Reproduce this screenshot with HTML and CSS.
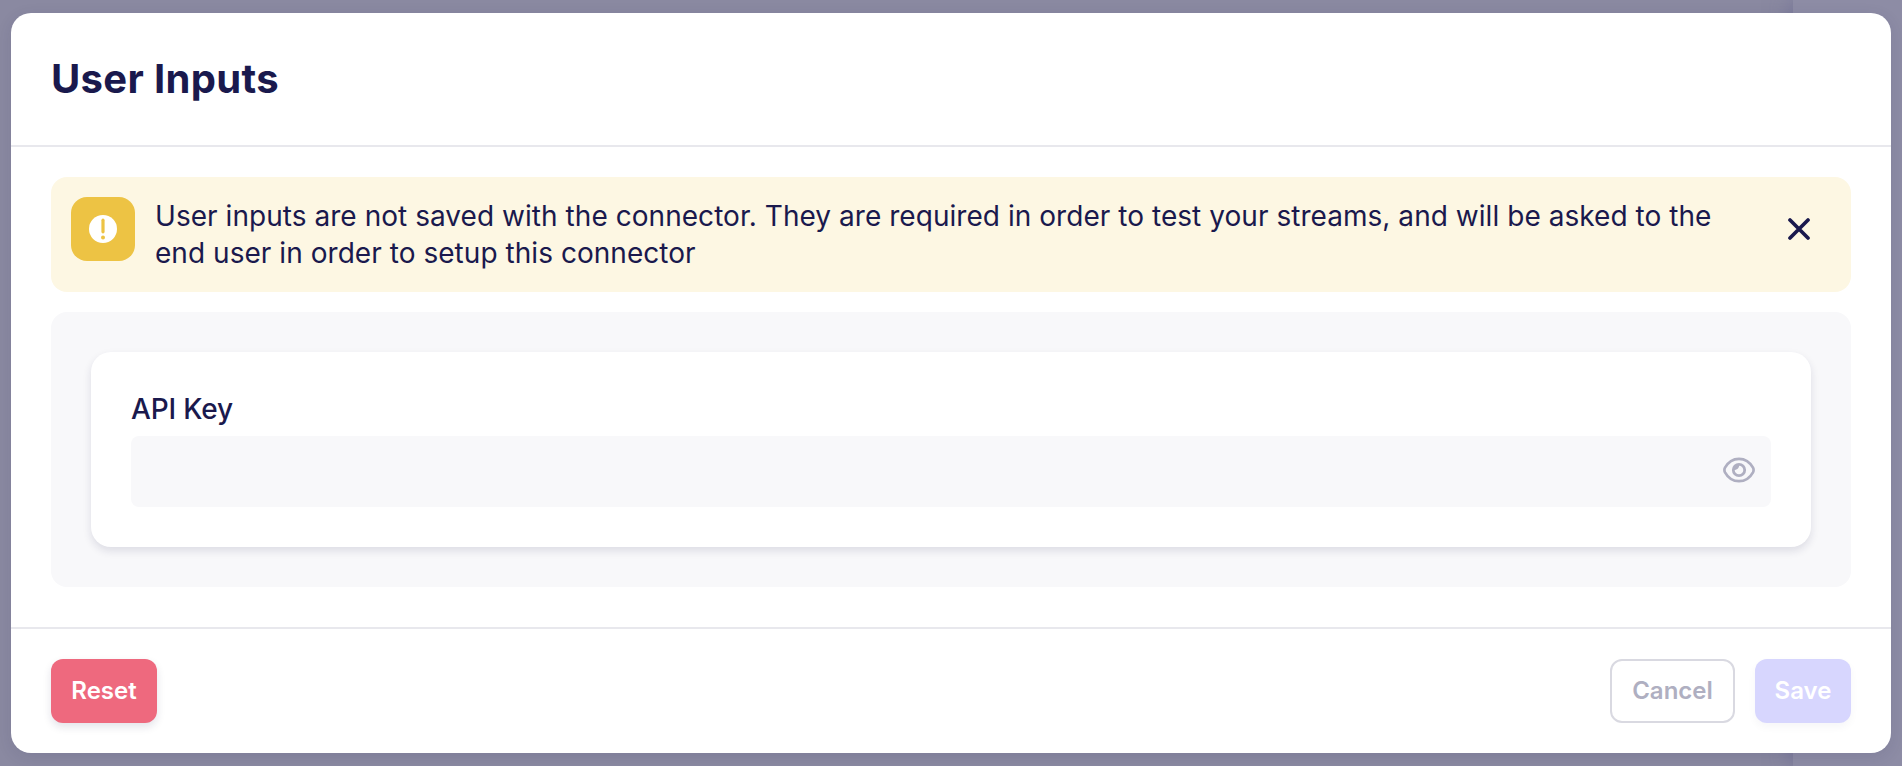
FILE: index.html
```
<!DOCTYPE html>
<html lang="en">
<head>
<meta charset="utf-8">
<title>User Inputs</title>
<link rel="stylesheet" href="styles.css">
</head>
<body>
<div class="backdrop-side"></div>
<main class="modal">
  <header class="modal-header"><h1 class="title">User Inputs</h1></header>
  <section class="modal-body">
    <div class="alert">
      <span class="alert-icon">
        <svg width="28" height="28" viewBox="0 0 28 28"><circle cx="14" cy="14" r="14" fill="#fff"/><path d="M14 5.2v11.600" stroke="#edc344" stroke-width="3.200" stroke-linecap="round"/><circle cx="14" cy="22.600" r="2" fill="#edc344"/></svg>
      </span>
      <p class="alert-text">User inputs are not saved with the connector. They are required in order to test your streams, and will be asked to the end user in order to setup this connector</p>
      <button class="close" aria-label="Close">
        <svg width="22" height="22" viewBox="0 0 22 22"><path d="M2 2l18 18M20 2L2 20" stroke="#1a194d" stroke-width="3.700" stroke-linecap="round"/></svg>
      </button>
    </div>
    <div class="panel">
      <div class="card">
        <label class="label" for="api-key">API Key</label>
        <div class="field">
          <input class="input" id="api-key" type="password">
          <svg class="eye" width="32" height="26" viewBox="0 0 32 26" fill="none" stroke="#afafc1"><path d="M16 1.800C22.600 1.800 27.400 6 30 10.700Q31.200 13 30 15.300C27.400 20 22.600 24.200 16 24.200S4.600 20 2 15.300Q.8 13 2 10.700C4.600 6 9.400 1.800 16 1.800Z" stroke-width="2.700"/><circle cx="16" cy="13" r="5.700" stroke-width="2.800"/><path d="M10 13A6 6 0 0 1 16 7C17 10.500 14 13.500 10 13Z" fill="#afafc1" stroke="none"/></svg>
        </div>
      </div>
    </div>
  </section>
  <footer class="modal-footer">
    <button class="btn reset">Reset</button>
    <div class="actions">
      <button class="btn cancel">Cancel</button>
      <button class="btn save">Save</button>
    </div>
  </footer>
</main>
</body>
</html>
```

FILE: styles.css
```
* { box-sizing: border-box; }
body {
  margin: 0;
  height: 766px;
  padding: 13px 11px;
  overflow: hidden;
  background: #8a89a1;
  color: #1a194d;
  font-family: Inter, "Liberation Sans", sans-serif;
}
.backdrop-side {
  position: absolute;
  top: 0;
  right: 0;
  width: 109px;
  height: 766px;
  background: #8d8ca5;
  box-shadow: -2px 0 20px rgba(100, 98, 145, .5);
}
.modal {
  position: relative;
  display: flex;
  flex-direction: column;
  height: 740px;
  border-radius: 20px;
  background: #fff;
  box-shadow: 0 4px 16px rgba(26, 25, 77, .1);
}
.modal-header {
  display: flex;
  align-items: center;
  height: 134px;
  padding: 0 40px;
  border-bottom: 2px solid #e8e8ed;
}
.title { margin: 0; font-size: 40px; line-height: 48px; font-weight: 700; letter-spacing: .33px; }
.modal-body { flex: 1; padding: 30px 40px 0; }
.alert {
  display: flex;
  align-items: flex-start;
  height: 115px;
  padding: 20px;
  border-radius: 16px;
  background: #fdf7e3;
}
.alert-icon {
  display: flex;
  flex: none;
  align-items: center;
  justify-content: center;
  width: 64px;
  height: 64px;
  border-radius: 16px;
  background: #edc344;
}
.alert-text { flex: 1; margin: 1px 0 0 20px; font-size: 28px; line-height: 37px; letter-spacing: .045px; }
.close {
  display: flex;
  flex: none;
  align-items: center;
  justify-content: center;
  width: 64px;
  height: 64px;
  margin-left: 20px;
  padding: 0;
  border: 0;
  background: none;
}
.panel {
  height: 275px;
  margin-top: 20px;
  padding: 40px;
  border-radius: 16px;
  background: #f8f8fa;
}
.card {
  height: 195px;
  padding: 40px;
  border-radius: 20px;
  background: #fff;
  box-shadow: 0 4px 8px rgba(26, 25, 77, .12);
}
.label { display: block; height: 44px; font-size: 28px; line-height: 34px; font-weight: 500; letter-spacing: -.17px; }
.field {
  display: flex;
  align-items: center;
  height: 71px;
  padding: 0 16px;
  border-radius: 8px;
  background: #f8f8fa;
}
.input { flex: 1; height: 100%; border: 0; outline: 0; background: none; font: inherit; }
.eye { flex: none; margin-bottom: 3px; }
.modal-footer {
  display: flex;
  justify-content: space-between;
  height: 126px;
  padding: 30px 40px;
  border-top: 2px solid #e8e8ed;
}
.actions { display: flex; gap: 20px; }
.btn {
  height: 64px;
  padding: 0;
  border: 0;
  border-radius: 12px;
  font: 600 24px/30px Inter, "Liberation Sans", sans-serif;
}
.reset { width: 106px; background: #ee697e; color: #fff; box-shadow: 0 4px 8px rgba(26, 25, 77, .12); }
.cancel { width: 125px; border: 2px solid #d9d9e1; background: #fff; color: #afafc1; }
.save { width: 96px; background: #d7d6fe; color: #fff; box-shadow: 0 4px 8px rgba(26, 25, 77, .04); }
```
